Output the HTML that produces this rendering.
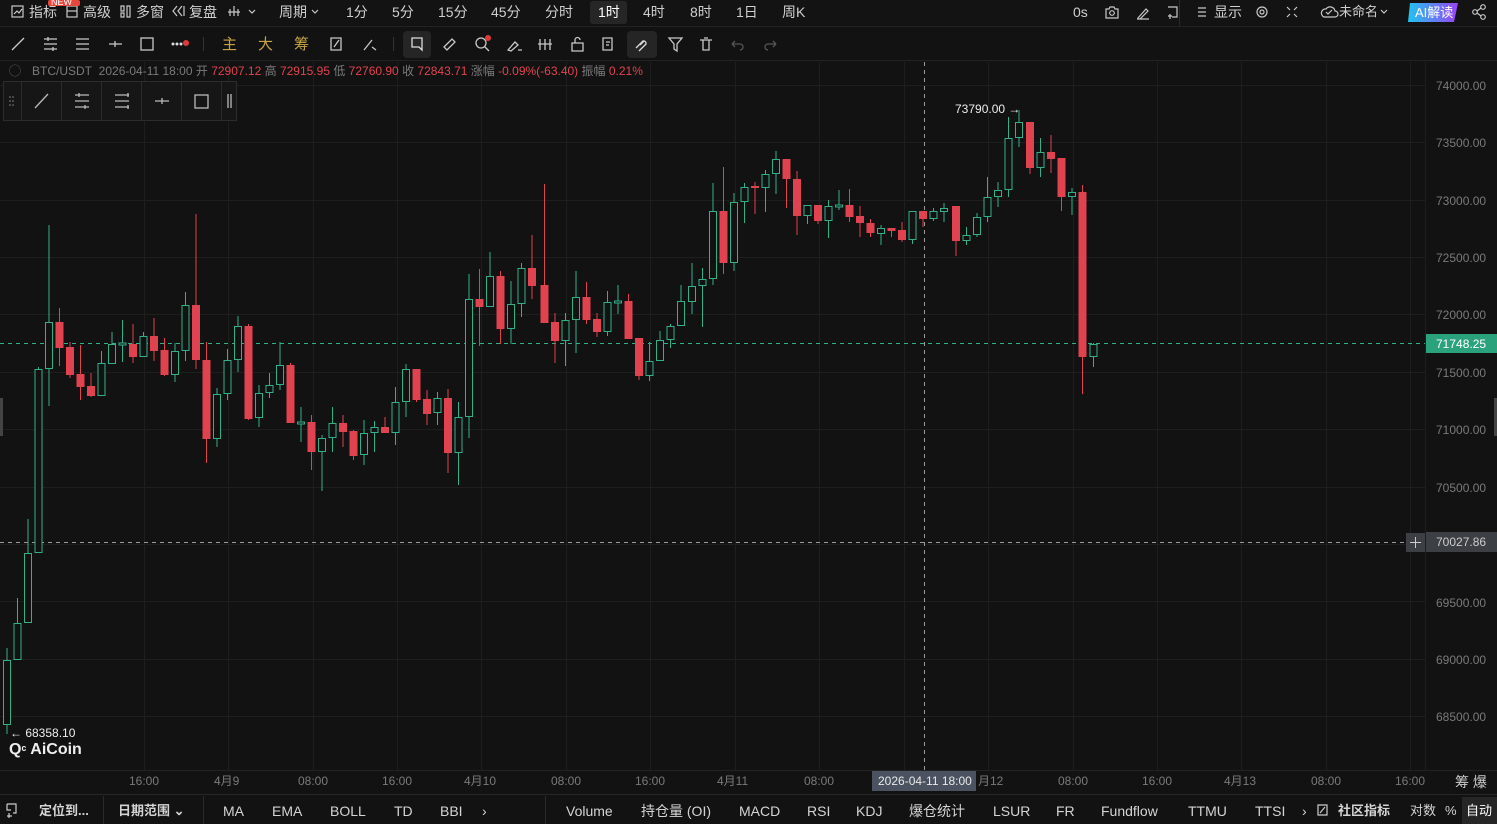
<!DOCTYPE html>
<html><head><meta charset="utf-8"><style>
*{margin:0;padding:0;box-sizing:border-box}
body{width:1497px;height:824px;background:#121212;overflow:hidden;position:relative;font-family:"Liberation Sans","Noto Sans CJK SC",sans-serif;color:#cfcfcf}
.t{position:absolute;white-space:nowrap;font-size:14px;line-height:16px}
.s{position:absolute;white-space:nowrap;font-size:12px;line-height:14px;color:#7a7a7a}
.b{position:absolute;white-space:nowrap;font-size:14px;line-height:16px;color:#d4d4d4}
.red{color:#e0434f}
svg{position:absolute;left:0;top:0}
.g{fill:#121212;stroke:#31b08a;stroke-width:1}
.gl{stroke:#31b08a}
.r{fill:#e0434f;stroke:none}
.rl{stroke:#e0434f}
</style></head><body>

<svg width="1497" height="824">
<!-- bars -->
<rect x="0" y="0" width="1497" height="25" fill="#131313"/>
<line x1="0" y1="26.5" x2="1497" y2="26.5" stroke="#232323"/>
<line x1="0" y1="60.5" x2="1497" y2="60.5" stroke="#232323"/>
<line x1="1179.5" y1="0" x2="1179.5" y2="26" stroke="#2a2a2a"/>
<!-- grid -->
<g stroke="#1e1e1e" stroke-width="1">
<line x1="0" x2="1425" y1="85.5" y2="85.5"/><line x1="0" x2="1425" y1="142.5" y2="142.5"/><line x1="0" x2="1425" y1="200.5" y2="200.5"/><line x1="0" x2="1425" y1="257.5" y2="257.5"/><line x1="0" x2="1425" y1="314.5" y2="314.5"/><line x1="0" x2="1425" y1="372.5" y2="372.5"/><line x1="0" x2="1425" y1="429.5" y2="429.5"/><line x1="0" x2="1425" y1="487.5" y2="487.5"/><line x1="0" x2="1425" y1="544.5" y2="544.5"/><line x1="0" x2="1425" y1="601.5" y2="601.5"/><line x1="0" x2="1425" y1="659.5" y2="659.5"/><line x1="0" x2="1425" y1="716.5" y2="716.5"/>
<line y1="62" y2="770" x1="144.5" x2="144.5"/><line y1="62" y2="770" x1="228.5" x2="228.5"/><line y1="62" y2="770" x1="313.5" x2="313.5"/><line y1="62" y2="770" x1="397.5" x2="397.5"/><line y1="62" y2="770" x1="481.5" x2="481.5"/><line y1="62" y2="770" x1="566.5" x2="566.5"/><line y1="62" y2="770" x1="650.5" x2="650.5"/><line y1="62" y2="770" x1="735.5" x2="735.5"/><line y1="62" y2="770" x1="819.5" x2="819.5"/><line y1="62" y2="770" x1="904.5" x2="904.5"/><line y1="62" y2="770" x1="988.5" x2="988.5"/><line y1="62" y2="770" x1="1073.5" x2="1073.5"/><line y1="62" y2="770" x1="1157.5" x2="1157.5"/><line y1="62" y2="770" x1="1241.5" x2="1241.5"/><line y1="62" y2="770" x1="1326.5" x2="1326.5"/><line y1="62" y2="770" x1="1410.5" x2="1410.5"/>
</g>
<line x1="0" y1="770.5" x2="1497" y2="770.5" stroke="#232323"/>
<line x1="0" y1="794.5" x2="1497" y2="794.5" stroke="#262626"/>
<line x1="1425.5" y1="62" x2="1425.5" y2="770" stroke="#1e1e1e"/>
<!-- dashed lines -->
<line x1="0" y1="343.5" x2="1425" y2="343.5" stroke="#31b08a" stroke-dasharray="4 4"/>
<line x1="0" y1="542.5" x2="1406" y2="542.5" stroke="#9a9a9a" stroke-dasharray="4 4"/>
<line x1="924.5" y1="62" x2="924.5" y2="770" stroke="#9a9a9a" stroke-dasharray="4 4"/>

<!-- candles -->
<g id="c">
<line class="gl" x1="7" x2="7" y1="648" y2="734"/><rect class="g" x="3.5" y="660.5" width="7" height="64"/>
<line class="gl" x1="17.5" x2="17.5" y1="598" y2="660"/><rect class="g" x="14" y="623.5" width="7" height="36"/>
<line class="gl" x1="28" x2="28" y1="519" y2="623"/><rect class="g" x="24.5" y="553.5" width="7" height="69"/>
<line class="gl" x1="38.5" x2="38.5" y1="367" y2="553"/><rect class="g" x="35" y="369.5" width="7" height="183"/>
<line class="gl" x1="49" x2="49" y1="225" y2="406"/><rect class="g" x="45.5" y="322.5" width="7" height="46"/>
<line class="rl" x1="59.5" x2="59.5" y1="308" y2="366"/><rect class="r" x="55.5" y="322" width="8" height="26"/>
<line class="rl" x1="70" x2="70" y1="342" y2="378"/><rect class="r" x="66" y="347" width="8" height="28"/>
<line class="rl" x1="80.5" x2="80.5" y1="345" y2="400"/><rect class="r" x="76.5" y="374" width="8" height="13"/>
<line class="rl" x1="91" x2="91" y1="373" y2="397"/><rect class="r" x="87" y="386" width="8" height="10"/>
<line class="gl" x1="101.5" x2="101.5" y1="351" y2="396"/><rect class="g" x="98" y="363.5" width="7" height="32"/>
<line class="gl" x1="112" x2="112" y1="332" y2="364"/><rect class="g" x="108.5" y="344.5" width="7" height="19"/>
<line class="gl" x1="122.5" x2="122.5" y1="320" y2="362"/><rect class="g" x="119" y="343" width="7" height="2"/>
<line class="rl" x1="133" x2="133" y1="324" y2="363"/><rect class="r" x="129" y="344" width="8" height="13"/>
<line class="gl" x1="143.5" x2="143.5" y1="332" y2="357"/><rect class="g" x="140" y="336.5" width="7" height="20"/>
<line class="rl" x1="154" x2="154" y1="318" y2="361"/><rect class="r" x="150" y="336" width="8" height="15"/>
<line class="rl" x1="164.5" x2="164.5" y1="338" y2="376"/><rect class="r" x="160.5" y="350" width="8" height="25"/>
<line class="gl" x1="175" x2="175" y1="343" y2="382"/><rect class="g" x="171.5" y="351.5" width="7" height="23"/>
<line class="gl" x1="185.5" x2="185.5" y1="292" y2="361"/><rect class="g" x="182" y="305.5" width="7" height="45"/>
<line class="rl" x1="196" x2="196" y1="214" y2="369"/><rect class="r" x="192" y="305" width="8" height="55"/>
<line class="rl" x1="206.5" x2="206.5" y1="342" y2="463"/><rect class="r" x="202.5" y="360" width="8" height="79"/>
<line class="gl" x1="217" x2="217" y1="388" y2="447"/><rect class="g" x="213.5" y="394.5" width="7" height="44"/>
<line class="gl" x1="227.5" x2="227.5" y1="349" y2="400"/><rect class="g" x="224" y="360.5" width="7" height="33"/>
<line class="gl" x1="238" x2="238" y1="316" y2="372"/><rect class="g" x="234.5" y="326.5" width="7" height="33"/>
<line class="rl" x1="248.5" x2="248.5" y1="324" y2="420"/><rect class="r" x="244.5" y="326" width="8" height="93"/>
<line class="gl" x1="259" x2="259" y1="385" y2="427"/><rect class="g" x="255.5" y="393.5" width="7" height="24"/>
<line class="gl" x1="269.5" x2="269.5" y1="373" y2="398"/><rect class="g" x="266" y="385.5" width="7" height="7"/>
<line class="gl" x1="280" x2="280" y1="342" y2="390"/><rect class="g" x="276.5" y="365.5" width="7" height="19"/>
<line class="rl" x1="290.5" x2="290.5" y1="363" y2="423"/><rect class="r" x="286.5" y="365" width="8" height="58"/>
<line class="gl" x1="301" x2="301" y1="407" y2="442"/><rect class="g" x="297.5" y="422" width="7" height="2"/>
<line class="rl" x1="311.5" x2="311.5" y1="415" y2="470"/><rect class="r" x="307.5" y="422" width="8" height="30"/>
<line class="gl" x1="322" x2="322" y1="435" y2="491"/><rect class="g" x="318.5" y="438.5" width="7" height="13"/>
<line class="gl" x1="332.5" x2="332.5" y1="407" y2="452"/><rect class="g" x="329" y="423.5" width="7" height="14"/>
<line class="rl" x1="343" x2="343" y1="415" y2="447"/><rect class="r" x="339" y="423" width="8" height="9"/>
<line class="rl" x1="353.5" x2="353.5" y1="430" y2="460"/><rect class="r" x="349.5" y="431" width="8" height="25"/>
<line class="gl" x1="364" x2="364" y1="420" y2="465"/><rect class="g" x="360.5" y="433.5" width="7" height="21"/>
<line class="gl" x1="374.5" x2="374.5" y1="421" y2="452"/><rect class="g" x="371" y="427.5" width="7" height="5"/>
<line class="rl" x1="385" x2="385" y1="417" y2="433"/><rect class="r" x="381" y="427" width="8" height="6"/>
<line class="gl" x1="395.5" x2="395.5" y1="387" y2="445"/><rect class="g" x="392" y="402.5" width="7" height="30"/>
<line class="gl" x1="406" x2="406" y1="364" y2="417"/><rect class="g" x="402.5" y="369.5" width="7" height="32"/>
<line class="rl" x1="416.5" x2="416.5" y1="369" y2="402"/><rect class="r" x="412.5" y="369" width="8" height="31"/>
<line class="rl" x1="427" x2="427" y1="390" y2="425"/><rect class="r" x="423" y="399" width="8" height="15"/>
<line class="gl" x1="437.5" x2="437.5" y1="392" y2="425"/><rect class="g" x="434" y="398.5" width="7" height="14"/>
<line class="rl" x1="448" x2="448" y1="389" y2="473"/><rect class="r" x="444" y="398" width="8" height="55"/>
<line class="gl" x1="458.5" x2="458.5" y1="402" y2="485"/><rect class="g" x="455" y="417.5" width="7" height="35"/>
<line class="gl" x1="469" x2="469" y1="274" y2="438"/><rect class="g" x="465.5" y="299.5" width="7" height="117"/>
<line class="rl" x1="479.5" x2="479.5" y1="269" y2="346"/><rect class="r" x="475.5" y="299" width="8" height="8"/>
<line class="gl" x1="490" x2="490" y1="252" y2="307"/><rect class="g" x="486.5" y="276.5" width="7" height="30"/>
<line class="rl" x1="500.5" x2="500.5" y1="271" y2="344"/><rect class="r" x="496.5" y="276" width="8" height="53"/>
<line class="gl" x1="511" x2="511" y1="281" y2="344"/><rect class="g" x="507.5" y="304.5" width="7" height="24"/>
<line class="gl" x1="521.5" x2="521.5" y1="263" y2="317"/><rect class="g" x="518" y="268.5" width="7" height="35"/>
<line class="rl" x1="532" x2="532" y1="235" y2="299"/><rect class="r" x="528" y="268" width="8" height="18"/>
<line class="rl" x1="544.5" x2="544.5" y1="184" y2="323"/><rect class="r" x="540.5" y="285" width="8" height="38"/>
<line class="rl" x1="555" x2="555" y1="313" y2="363"/><rect class="r" x="551" y="322" width="8" height="19"/>
<line class="gl" x1="565.5" x2="565.5" y1="313" y2="366"/><rect class="g" x="562" y="320.5" width="7" height="20"/>
<line class="gl" x1="576" x2="576" y1="271" y2="353"/><rect class="g" x="572.5" y="297.5" width="7" height="22"/>
<line class="rl" x1="586.5" x2="586.5" y1="282" y2="324"/><rect class="r" x="582.5" y="297" width="8" height="23"/>
<line class="rl" x1="597" x2="597" y1="313" y2="337"/><rect class="r" x="593" y="319" width="8" height="13"/>
<line class="gl" x1="607.5" x2="607.5" y1="291" y2="336"/><rect class="g" x="604" y="302.5" width="7" height="29"/>
<line class="gl" x1="618" x2="618" y1="285" y2="314"/><rect class="g" x="614.5" y="301" width="7" height="2"/>
<line class="rl" x1="628.5" x2="628.5" y1="294" y2="339"/><rect class="r" x="624.5" y="301" width="8" height="38"/>
<line class="rl" x1="639" x2="639" y1="338" y2="380"/><rect class="r" x="635" y="338" width="8" height="38"/>
<line class="gl" x1="649.5" x2="649.5" y1="342" y2="381"/><rect class="g" x="646" y="361.5" width="7" height="14"/>
<line class="gl" x1="660" x2="660" y1="331" y2="361"/><rect class="g" x="656.5" y="340.5" width="7" height="20"/>
<line class="gl" x1="670.5" x2="670.5" y1="324" y2="348"/><rect class="g" x="667" y="326.5" width="7" height="13"/>
<line class="gl" x1="681" x2="681" y1="285" y2="326"/><rect class="g" x="677.5" y="301.5" width="7" height="24"/>
<line class="gl" x1="692" x2="692" y1="263" y2="314"/><rect class="g" x="688.5" y="286.5" width="7" height="15"/>
<line class="gl" x1="702.5" x2="702.5" y1="268" y2="327"/><rect class="g" x="699" y="279.5" width="7" height="6"/>
<line class="gl" x1="713" x2="713" y1="183" y2="285"/><rect class="g" x="709.5" y="211.5" width="7" height="67"/>
<line class="rl" x1="723.5" x2="723.5" y1="167" y2="274"/><rect class="r" x="719.5" y="211" width="8" height="52"/>
<line class="gl" x1="734" x2="734" y1="193" y2="271"/><rect class="g" x="730.5" y="202.5" width="7" height="60"/>
<line class="gl" x1="744.5" x2="744.5" y1="183" y2="223"/><rect class="g" x="741" y="187.5" width="7" height="14"/>
<line class="rl" x1="755" x2="755" y1="182" y2="214"/><rect class="r" x="751" y="186" width="8" height="2"/>
<line class="gl" x1="765.5" x2="765.5" y1="170" y2="212"/><rect class="g" x="762" y="174.5" width="7" height="13"/>
<line class="gl" x1="776" x2="776" y1="151" y2="194"/><rect class="g" x="772.5" y="159.5" width="7" height="14"/>
<line class="rl" x1="786.5" x2="786.5" y1="159" y2="208"/><rect class="r" x="782.5" y="159" width="8" height="20"/>
<line class="rl" x1="797" x2="797" y1="171" y2="235"/><rect class="r" x="793" y="179" width="8" height="37"/>
<line class="gl" x1="807.5" x2="807.5" y1="205" y2="224"/><rect class="g" x="804" y="205.5" width="7" height="10"/>
<line class="rl" x1="818" x2="818" y1="205" y2="224"/><rect class="r" x="814" y="205" width="8" height="16"/>
<line class="gl" x1="828.5" x2="828.5" y1="200" y2="238"/><rect class="g" x="825" y="206.5" width="7" height="14"/>
<line class="gl" x1="839" x2="839" y1="190" y2="210"/><rect class="g" x="835.5" y="205" width="7" height="2"/>
<line class="rl" x1="849.5" x2="849.5" y1="189" y2="222"/><rect class="r" x="845.5" y="205" width="8" height="12"/>
<line class="rl" x1="860" x2="860" y1="206" y2="237"/><rect class="r" x="856" y="216" width="8" height="7"/>
<line class="rl" x1="870.5" x2="870.5" y1="219" y2="237"/><rect class="r" x="866.5" y="223" width="8" height="10"/>
<line class="gl" x1="881" x2="881" y1="225" y2="245"/><rect class="g" x="877.5" y="228.5" width="7" height="5"/>
<line class="rl" x1="891.5" x2="891.5" y1="228" y2="237"/><rect class="r" x="887.5" y="228" width="8" height="3"/>
<line class="rl" x1="902" x2="902" y1="222" y2="242"/><rect class="r" x="898" y="230" width="8" height="10"/>
<line class="gl" x1="912.5" x2="912.5" y1="211" y2="244"/><rect class="g" x="909" y="211.5" width="7" height="28"/>
<line class="rl" x1="923" x2="923" y1="211" y2="227"/><rect class="r" x="919" y="211" width="8" height="8"/>
<line class="gl" x1="933.5" x2="933.5" y1="208" y2="221"/><rect class="g" x="930" y="211.5" width="7" height="7"/>
<line class="gl" x1="944" x2="944" y1="203" y2="222"/><rect class="g" x="940.5" y="208.5" width="7" height="3"/>
<line class="rl" x1="956" x2="956" y1="206" y2="256"/><rect class="r" x="952" y="206" width="8" height="35"/>
<line class="gl" x1="966.5" x2="966.5" y1="227" y2="245"/><rect class="g" x="963" y="235.5" width="7" height="5"/>
<line class="gl" x1="977" x2="977" y1="213" y2="237"/><rect class="g" x="973.5" y="217.5" width="7" height="17"/>
<line class="gl" x1="987.5" x2="987.5" y1="177" y2="222"/><rect class="g" x="984" y="197.5" width="7" height="19"/>
<line class="gl" x1="998" x2="998" y1="182" y2="207"/><rect class="g" x="994.5" y="190.5" width="7" height="6"/>
<line class="gl" x1="1008.5" x2="1008.5" y1="117" y2="197"/><rect class="g" x="1005" y="138.5" width="7" height="51"/>
<line class="gl" x1="1019" x2="1019" y1="110" y2="147"/><rect class="g" x="1015.5" y="122.5" width="7" height="15"/>
<line class="rl" x1="1030" x2="1030" y1="122" y2="174"/><rect class="r" x="1026" y="122" width="8" height="46"/>
<line class="gl" x1="1040.5" x2="1040.5" y1="138" y2="177"/><rect class="g" x="1037" y="152.5" width="7" height="15"/>
<line class="rl" x1="1051" x2="1051" y1="135" y2="173"/><rect class="r" x="1047" y="152" width="8" height="7"/>
<line class="rl" x1="1061.5" x2="1061.5" y1="158" y2="211"/><rect class="r" x="1057.5" y="158" width="8" height="39"/>
<line class="gl" x1="1072" x2="1072" y1="188" y2="215"/><rect class="g" x="1068.5" y="192.5" width="7" height="4"/>
<line class="rl" x1="1082.5" x2="1082.5" y1="185" y2="394"/><rect class="r" x="1078.5" y="192" width="8" height="165"/>
<line class="gl" x1="1093.5" x2="1093.5" y1="343" y2="367"/><rect class="g" x="1090" y="344.5" width="7" height="12"/>
</g>

<!-- price tags -->
<rect x="1426" y="334" width="71" height="19" fill="#2aa37d"/>
<rect x="1426" y="532" width="71" height="20" fill="#3c3f44"/>
<rect x="1406" y="533" width="19" height="19" fill="#3c3f44"/>
<line x1="1410" y1="542.5" x2="1421" y2="542.5" stroke="#ccc"/><line x1="1415.5" y1="537" x2="1415.5" y2="548" stroke="#ccc"/>
<rect x="872" y="771" width="104" height="20" fill="#4b5361"/>

<!-- drawing toolbar box -->
<rect x="3.5" y="81.5" width="233" height="39" fill="#161616" stroke="#2c2c2c"/>
<g stroke="#2c2c2c"><line x1="21.5" y1="82" x2="21.5" y2="120"/><line x1="61.5" y1="82" x2="61.5" y2="120"/><line x1="101.5" y1="82" x2="101.5" y2="120"/><line x1="141.5" y1="82" x2="141.5" y2="120"/><line x1="181.5" y1="82" x2="181.5" y2="120"/><line x1="221.5" y1="82" x2="221.5" y2="120"/></g>
<g stroke="#bbb" stroke-width="1.3" fill="none">
<g fill="#888" stroke="none"><circle cx="10" cy="97" r=".8"/><circle cx="13" cy="97" r=".8"/><circle cx="10" cy="101" r=".8"/><circle cx="13" cy="101" r=".8"/><circle cx="10" cy="105" r=".8"/><circle cx="13" cy="105" r=".8"/></g>
<line x1="35" y1="108" x2="48" y2="94"/>
<path d="M75 95h14M75 101h14M75 107h14M79 93v4M85 105v4"/>
<path d="M115 95h14M115 101h14M115 107h14M128 93v4M128 105v4"/>
<path d="M155 101h14M162 98v6"/>
<rect x="195" y="95" width="13" height="13"/>
<path d="M228 94v14M231 94v14"/>
</g>
<!-- second row icons -->
<g stroke="#c8c8c8" stroke-width="1.3" fill="none">
<line x1="12" y1="50" x2="24" y2="38"/>
<path d="M44 39h13M44 44h13M44 49h13M48 37v4M53 47v4"/>
<path d="M76 39h13M76 44h13M76 49h13"/>
<path d="M109 44h13M115 41v6"/>
<rect x="141" y="38" width="12" height="12"/>
<path d="M331 38h10v12h-10zM334 47l5-7"/>
<path d="M364 50l8-10M372 47l4 3"/>
<path d="M412 38h10v12l-3-3h-7z"/>
<path d="M444 47l8-8 3 3-8 8z"/>
<circle cx="481" cy="43" r="5"/><line x1="485" y1="47" x2="489" y2="51"/>
<path d="M508 50l7-8 3 3-7 6zM518 50h4"/>
<path d="M540 39v11M545 39v11M550 39v11M538 44h14"/>
<path d="M572 43h11v8h-11zM575 43v-3a2.5 2.5 0 015 0"/>
<path d="M603 38h9v12h-9zM606 42h4M606 45h3"/>
<path d="M636 48l7-7a2.5 2.5 0 013 3l-7 7M640 45l4-4"/>
<path d="M669 38h13l-5 6v7l-3-2v-5z"/>
<path d="M700 40h12M703 40v10h6v-10M704 38h4"/>
<path d="M732 44h8a3 3 0 010 6M732 44l3-3M732 44l3 3" stroke="#555"/>
<path d="M776 44h-8a3 3 0 000 6M776 44l-3-3M776 44l-3 3" stroke="#555"/>
</g>
<g fill="#ddd"><circle cx="173" cy="44" r="1.5"/><circle cx="177" cy="44" r="1.5"/><circle cx="181" cy="44" r="1.5"/></g>
<circle cx="186" cy="43" r="3" fill="#e03a3a"/>
<circle cx="488" cy="38" r="3" fill="#e03a3a"/>
<rect x="403" y="31" width="28" height="27" rx="4" fill="#252525"/>
<path d="M412 38h10v12l-3-3h-7z" stroke="#ddd" stroke-width="1.3" fill="none"/>
<rect x="627" y="31" width="30" height="27" rx="4" fill="#252525"/>
<path d="M636 48l7-7a2.5 2.5 0 013 3l-7 7M640 45l4-4" stroke="#ddd" stroke-width="1.3" fill="none"/>
<line x1="203.5" y1="37" x2="203.5" y2="51" stroke="#333"/>
<line x1="393.5" y1="37" x2="393.5" y2="51" stroke="#333"/>
<!-- top icons -->
<g stroke="#c8c8c8" stroke-width="1.2" fill="none">
<rect x="12" y="6" width="11" height="11"/><path d="M14 14l3-3 2 2 3-4"/>
<rect x="67" y="6" width="10" height="11"/><path d="M67 11h10"/>
<path d="M121 6h3v5h-3zM121 13h3v4h-3zM127 6h3v11h-3z"/>
<path d="M177 6l-4 5 4 5M182 6l-4 5 4 5M184 6v10"/>
<path d="M230 9v7M234 6v10M238 9v7M228 12h12M249 10l3 3 3-3"/>
<path d="M312 10l3 3 3-3"/>
<path d="M1106 9h3l1-2h4l1 2h3v9h-12z"/><circle cx="1112" cy="13" r="2.3"/>
<path d="M1138 18l8-9 2 2-8 8h-2zM1137 19h12"/>
<path d="M1168 7h9v10h-5M1170 14v5M1168 16h4"/>
<path d="M1198 8h8M1198 12h8M1198 16h8"/>
<circle cx="1262" cy="12" r="5"/><circle cx="1262" cy="12" r="2"/>
<path d="M1287 7l3 3M1297 7l-3 3M1287 17l3-3M1297 17l-3-3"/>
<path d="M1322 15a4 4 0 014-6 5 5 0 019 2 3 3 0 010 6h-11a3 3 0 01-2-2zM1326 12l2 2 4-4"/>
<path d="M1381 10l3 3 3-3"/>
<circle cx="1483" cy="7" r="2.3"/><circle cx="1475" cy="12" r="2.3"/><circle cx="1483" cy="17" r="2.3"/><path d="M1477 11l4-3M1477 13l4 3"/>
</g>
<rect x="590" y="1" width="37" height="23" rx="3" fill="#262626"/>
<defs><linearGradient id="ai" x1="0" x2="1"><stop offset="0" stop-color="#21c3f0"/><stop offset="1" stop-color="#9b43f5"/></linearGradient></defs>
<path d="M1410 3h48l-4 19h-46z" fill="url(#ai)"/>
<rect x="48" y="0" width="32" height="6" rx="2" fill="#e8463c"/>
<!-- bottom bar -->
<rect x="1462" y="797" width="35" height="27" fill="#262626"/>
<g stroke="#2a2a2a"><line x1="103.5" y1="796" x2="103.5" y2="824"/><line x1="203.5" y1="796" x2="203.5" y2="824"/><line x1="545.5" y1="796" x2="545.5" y2="824"/></g>
<g stroke="#ccc" stroke-width="1.2" fill="none"><path d="M7 804h9v9h-3M7 804v6h4M9 813v5M7 816h5"/><path d="M1318 805h9v10h-9zM1320 813l5-6"/></g>
<!-- left edge marks -->
<rect x="0" y="398" width="3" height="38" fill="#444"/>
<rect x="1494" y="398" width="3" height="38" fill="#444"/>
</svg>

<!-- top text -->
<div class="t" style="left:0;top:-6px;font-size:9px;left:51px;color:#fff">NEW</div>
<div class="t" style="left:29px;top:4px">指标</div>
<div class="t" style="left:83px;top:4px">高级</div>
<div class="t" style="left:136px;top:4px">多窗</div>
<div class="t" style="left:189px;top:4px">复盘</div>
<div class="t" style="left:279px;top:4px">周期</div>
<div class="t" style="left:346px;top:4px">1分</div>
<div class="t" style="left:392px;top:4px">5分</div>
<div class="t" style="left:438px;top:4px">15分</div>
<div class="t" style="left:491px;top:4px">45分</div>
<div class="t" style="left:545px;top:4px">分时</div>
<div class="t" style="left:598px;top:4px;color:#fff">1时</div>
<div class="t" style="left:643px;top:4px">4时</div>
<div class="t" style="left:690px;top:4px">8时</div>
<div class="t" style="left:736px;top:4px">1日</div>
<div class="t" style="left:782px;top:4px">周K</div>
<div class="t" style="left:1073px;top:4px">0s</div>
<div class="t" style="left:1214px;top:4px">显示</div>
<div class="t" style="left:1339px;top:4px;font-size:13px">未命名</div>
<div class="t" style="left:1415px;top:5px;font-size:13px;color:#fff">AI解读</div>
<!-- second row text -->
<div class="t" style="left:222px;top:37px;font-size:15px;color:#c9a443">主</div>
<div class="t" style="left:258px;top:37px;font-size:15px;color:#c9a443">大</div>
<div class="t" style="left:294px;top:37px;font-size:15px;color:#c9a443">筹</div>
<!-- info line -->
<div class="s" style="left:9px;top:64px;color:#666">◯</div>
<div class="s" style="left:32px;top:64px">BTC/USDT&nbsp; 2026-04-11 18:00 开 <span class="red">72907.12</span> 高 <span class="red">72915.95</span> 低 <span class="red">72760.90</span> 收 <span class="red">72843.71</span> 涨幅 <span class="red">-0.09%(-63.40)</span> 振幅 <span class="red">0.21%</span></div>
<!-- price axis -->
<div class="s" style="left:1436px;top:79px">74000.00</div>
<div class="s" style="left:1436px;top:136px">73500.00</div>
<div class="s" style="left:1436px;top:194px">73000.00</div>
<div class="s" style="left:1436px;top:251px">72500.00</div>
<div class="s" style="left:1436px;top:308px">72000.00</div>
<div class="s" style="left:1436px;top:366px">71500.00</div>
<div class="s" style="left:1436px;top:423px">71000.00</div>
<div class="s" style="left:1436px;top:481px">70500.00</div>
<div class="s" style="left:1436px;top:596px">69500.00</div>
<div class="s" style="left:1436px;top:653px">69000.00</div>
<div class="s" style="left:1436px;top:710px">68500.00</div>
<div class="s" style="left:1436px;top:337px;color:#fff">71748.25</div>
<div class="s" style="left:1436px;top:535px;color:#ccc">70027.86</div>
<div class="s" style="left:955px;top:102px;color:#eee">73790.00 →</div>
<div class="s" style="left:10px;top:726px;color:#eee">← 68358.10</div>
<div class="t" style="left:9px;top:742px;font-size:16px;font-weight:bold;color:#eee">Q<span style="font-size:13px">ᶜ</span> AiCoin</div>
<!-- time axis -->
<div class="s" style="left:129px;top:774px">16:00</div>
<div class="s" style="left:214px;top:774px">4月9</div>
<div class="s" style="left:298px;top:774px">08:00</div>
<div class="s" style="left:382px;top:774px">16:00</div>
<div class="s" style="left:464px;top:774px">4月10</div>
<div class="s" style="left:551px;top:774px">08:00</div>
<div class="s" style="left:635px;top:774px">16:00</div>
<div class="s" style="left:717px;top:774px">4月11</div>
<div class="s" style="left:804px;top:774px">08:00</div>
<div class="s" style="left:878px;top:774px;color:#e8e8e8">2026-04-11 18:00</div>
<div class="s" style="left:978px;top:774px">月12</div>
<div class="s" style="left:1058px;top:774px">08:00</div>
<div class="s" style="left:1142px;top:774px">16:00</div>
<div class="s" style="left:1224px;top:774px">4月13</div>
<div class="s" style="left:1311px;top:774px">08:00</div>
<div class="s" style="left:1395px;top:774px">16:00</div>
<div class="t" style="left:1455px;top:774px;color:#ccc">筹 爆</div>
<!-- bottom bar -->
<div class="b" style="left:39px;top:803px;font-weight:bold;font-size:13px">定位到...</div>
<div class="b" style="left:118px;top:803px;font-weight:bold;font-size:13px">日期范围 ⌄</div>
<div class="b" style="left:223px;top:803px">MA</div>
<div class="b" style="left:272px;top:803px">EMA</div>
<div class="b" style="left:330px;top:803px">BOLL</div>
<div class="b" style="left:394px;top:803px">TD</div>
<div class="b" style="left:440px;top:803px">BBI</div>
<div class="b" style="left:482px;top:803px">›</div>
<div class="b" style="left:566px;top:803px">Volume</div>
<div class="b" style="left:641px;top:803px">持仓量 (OI)</div>
<div class="b" style="left:739px;top:803px">MACD</div>
<div class="b" style="left:807px;top:803px">RSI</div>
<div class="b" style="left:856px;top:803px">KDJ</div>
<div class="b" style="left:909px;top:803px">爆仓统计</div>
<div class="b" style="left:993px;top:803px">LSUR</div>
<div class="b" style="left:1056px;top:803px">FR</div>
<div class="b" style="left:1101px;top:803px">Fundflow</div>
<div class="b" style="left:1188px;top:803px">TTMU</div>
<div class="b" style="left:1255px;top:803px">TTSI</div>
<div class="b" style="left:1302px;top:803px">›</div>
<div class="b" style="left:1338px;top:803px;font-weight:bold;font-size:13px">社区指标</div>
<div class="b" style="left:1410px;top:803px;font-size:13px">对数</div>
<div class="b" style="left:1445px;top:803px;font-size:13px">%</div>
<div class="b" style="left:1466px;top:803px;font-size:13px;color:#fff">自动</div>
</body></html>
